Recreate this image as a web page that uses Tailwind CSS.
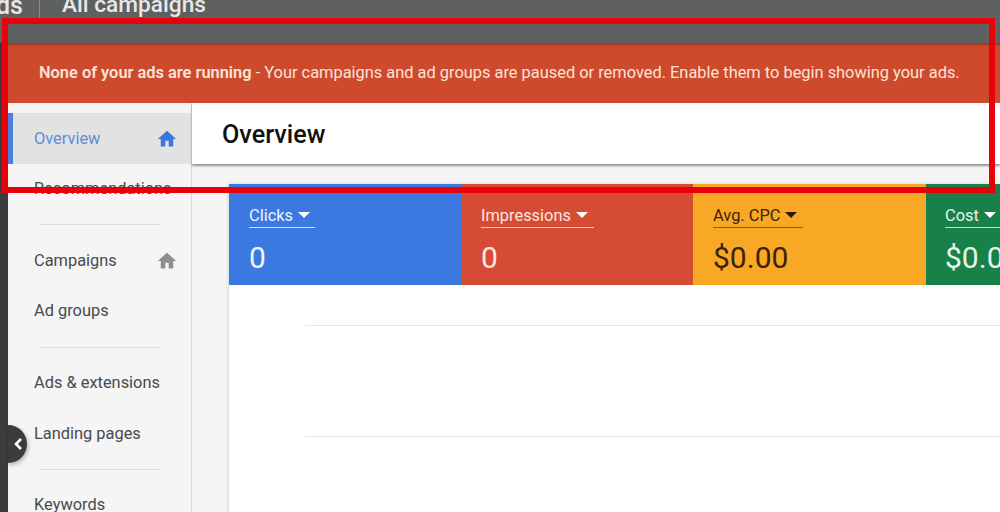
<!DOCTYPE html>
<html lang="en">
<head>
  <meta charset="UTF-8" />
  <title>All campaigns</title>
  <script src="https://cdn.jsdelivr.net/npm/@tailwindcss/browser@4"></script>
</head>
<body class="bg-[#3c3c3c] font-['Roboto',sans-serif] overflow-hidden">
  <div class="relative w-[1000px] h-[512px] overflow-hidden">

    <!-- Top bar -->
    <header class="h-[43px] bg-[#5f6060] overflow-hidden">
      <div class="flex items-start h-[18px] overflow-hidden text-[#e8e8e8]">
        <span class="w-[39px] -mt-[9px] -ml-[4px] mr-[4px] text-[25px] leading-[30px] font-medium">ds</span>
        <span class="w-px h-[18px] bg-[#8a8a8a]"></span>
        <span class="ml-[22px] -mt-[8px] text-[22.7px] leading-[26px] font-medium">All campaigns</span>
      </div>
    </header>

    <div class="flex h-[469px]">
      <!-- Dark strip left of the app -->
      <div class="w-[8px] shrink-0 bg-[#3c3c3c]"></div>

      <div class="flex-1 min-w-0">
        <!-- Alert banner -->
        <div class="h-[60px] flex items-center pl-[31px] bg-[#cd4a2c] text-[16.4px] text-[#fbe3da] whitespace-nowrap shadow-[inset_0_3px_3px_-2px_rgba(90,20,10,0.6)]">
          <strong class="font-semibold">None of your ads are running</strong>&nbsp;- Your campaigns and ad groups are paused or removed. Enable them to begin showing your ads.
        </div>

        <div class="flex h-[409px]">
          <!-- Sidebar -->
          <nav class="w-[184px] shrink-0 bg-[#f5f5f5] border-r border-[#d8d8d8] pt-[10px] text-[16.4px] text-[#4a4a4a] whitespace-nowrap">
            <div class="h-[51px] flex items-center justify-between pl-[21px] pr-[14px] bg-[#e2e2e2] border-l-[5px] border-[#4a7fdc] text-[#5b8edb]">
              <span class="mt-[2px]">Overview</span>
              <svg class="w-[20px] h-[20px] text-[#3b76d8]" viewBox="0 0 24 24" fill="currentColor"><path d="M10 21v-7h4v7h5.5v-9H23L12 2 1 12h3.5v9z"/></svg>
            </div>
            <div class="h-[48px] pt-[2px] flex items-center pl-[26px]">Recommendations</div>
            <div class="ml-[32px] mr-[31px] h-px bg-[#dddddd] mt-[12px]"></div>
            <div class="h-[70px] pt-[2px] flex items-center justify-between pl-[26px] pr-[14px]">
              <span>Campaigns</span>
              <svg class="w-[20px] h-[20px] text-[#8f8f8f]" viewBox="0 0 24 24" fill="currentColor"><path d="M10 21v-7h4v7h5.5v-9H23L12 2 1 12h3.5v9z"/></svg>
            </div>
            <div class="h-[32px] pt-[1px] flex items-center pl-[26px]">Ad groups</div>
            <div class="ml-[32px] mr-[31px] h-px bg-[#dddddd] mt-[20px]"></div>
            <div class="h-[69px] pt-[2px] flex items-center pl-[26px]">Ads &amp; extensions</div>
            <div class="h-[32px] pt-[3px] flex items-center pl-[26px]">Landing pages</div>
            <div class="ml-[32px] mr-[31px] h-px bg-[#dddddd] mt-[20px]"></div>
            <div class="h-[69px] pt-[2px] flex items-center pl-[26px]">Keywords</div>
          </nav>

          <!-- Main -->
          <main class="flex-1 min-w-0 bg-[#f5f5f5]">
            <div class="relative h-[61px] flex items-center pl-[30px] pt-[2px] bg-white shadow-[0_2px_2px_rgba(0,0,0,0.4)] text-[25.2px] font-medium text-[#111]">Overview</div>

            <div class="ml-[37px] mt-[20px] h-[400px] bg-white shadow-[-1px_0_3px_rgba(0,0,0,0.12)]">
              <!-- Metric cards -->
              <div class="flex h-[101px] whitespace-nowrap">
                <div class="w-[233px] shrink-0 pl-[20px] pt-[20px] bg-[#3b78e0] text-[#eef4fd]">
                  <div class="w-[66px] h-[24px] pt-[2px] flex items-center gap-[5px] border-b border-[#cfe0fa] text-[16.4px]">Clicks<span class="mb-[4px] border-x-[6px] border-x-transparent border-t-[6px] border-t-white"></span></div>
                  <div class="mt-[14px] text-[30px] leading-[32px]">0</div>
                </div>
                <div class="w-[231px] shrink-0 pl-[19px] pt-[20px] bg-[#d64b33] text-[#fbe6e0]">
                  <div class="w-[113px] h-[24px] pt-[2px] flex items-center gap-[5px] border-b border-[#f3c7bb] text-[16.4px]">Impressions<span class="mb-[4px] border-x-[6px] border-x-transparent border-t-[6px] border-t-white"></span></div>
                  <div class="mt-[14px] text-[30px] leading-[32px]">0</div>
                </div>
                <div class="w-[233px] shrink-0 pl-[20px] pt-[20px] bg-[#f9a825] text-[#3b2208]">
                  <div class="w-[90px] h-[24px] pt-[2px] flex items-center gap-[5px] border-b border-[#8a5a12] text-[16.4px]">Avg. CPC<span class="mb-[4px] border-x-[6px] border-x-transparent border-t-[6px] border-t-[#2b1a06]"></span></div>
                  <div class="mt-[14px] text-[30px] leading-[32px]">$0.00</div>
                </div>
                <div class="w-[100px] shrink-0 pl-[19px] pt-[20px] bg-[#188049] text-[#e6f4ec]">
                  <div class="w-[70px] h-[24px] pt-[2px] flex items-center gap-[5px] border-b border-[#bfe0cd] text-[16.4px]">Cost<span class="mb-[4px] border-x-[6px] border-x-transparent border-t-[6px] border-t-white"></span></div>
                  <div class="mt-[14px] text-[30px] leading-[32px]">$0.00</div>
                </div>
              </div>

              <!-- Chart grid lines -->
              <div class="ml-[76px] mt-[40px] h-px bg-[#e8e8e8]"></div>
              <div class="ml-[76px] mt-[110px] h-px bg-[#e8e8e8]"></div>
            </div>
          </main>
        </div>
      </div>
    </div>

    <!-- Collapse button on the sidebar edge -->
    <div class="absolute left-[8px] top-[425px] w-[19px] h-[38px] flex items-center justify-center rounded-r-full bg-[#3c3c3c] shadow-[1px_2px_4px_rgba(0,0,0,0.3)]">
      <svg class="w-[12px] h-[14px]" viewBox="0 0 12 14" fill="none" stroke="white" stroke-width="2.6"><path d="M9 2 4 7l5 5"/></svg>
    </div>

    <!-- Red annotation frame -->
    <div class="absolute left-[2px] top-[18px] w-[993px] h-[175px] border-[6px] border-[#e8000b]"></div>
  </div>
</body>
</html>
